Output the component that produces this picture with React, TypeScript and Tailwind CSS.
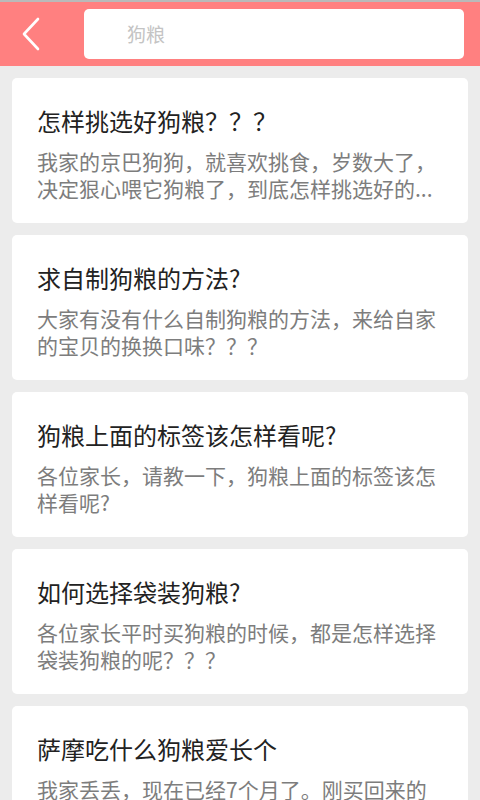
const posts = [
  {
    title: "怎样挑选好狗粮？？？",
    desc: "我家的京巴狗狗，就喜欢挑食，岁数大了，决定狠心喂它狗粮了，到底怎样挑选好的...",
  },
  {
    title: "求自制狗粮的方法?",
    desc: "大家有没有什么自制狗粮的方法，来给自家的宝贝的换换口味？？？",
  },
  {
    title: "狗粮上面的标签该怎样看呢?",
    desc: "各位家长，请教一下，狗粮上面的标签该怎样看呢?",
  },
  {
    title: "如何选择袋装狗粮?",
    desc: "各位家长平时买狗粮的时候，都是怎样选择袋装狗粮的呢？？？",
  },
  {
    title: "萨摩吃什么狗粮爱长个",
    desc: "我家丢丢，现在已经7个月了。刚买回来的时候很瘦小，吃什么狗粮能长个呢？",
  },
];

export default function App() {
  return (
    <div
      className="h-[800px] w-[480px] overflow-hidden bg-[#ececec]"
      style={{ fontFamily: '"Noto Sans CJK SC", "Noto Sans", sans-serif' }}
    >
      <div className="h-[2px] bg-[#b9b9b9]" />
      <header className="flex h-[64px] items-center bg-[#ff8080] pr-[16px]">
        <button className="flex h-full w-[84px] items-center pl-[20px]">
          <svg width="22" height="34" viewBox="0 0 22 34" fill="none">
            <path
              d="M18 2 L4 17 L18 32"
              stroke="white"
              strokeWidth="2.6"
              strokeLinecap="round"
              strokeLinejoin="round"
            />
          </svg>
        </button>
        <div className="flex h-[50px] flex-1 items-center rounded-[5px] bg-white pl-[43px]">
          <span className="text-[19px] text-[#c4c4c4]">狗粮</span>
        </div>
      </header>

      <div className="flex flex-col gap-[12px] px-[12px] pt-[12px]">
        {posts.map((p) => (
          <div
            key={p.title}
            className="rounded-[5px] bg-white px-[25px] pb-[21px] pt-[28px]"
          >
            <h2 className="text-[24px] leading-[30px] text-[#222]">{p.title}</h2>
            <p className="mt-[12px] text-[21px] leading-[27px] text-[#7d7d7d]">
              {p.desc}
            </p>
          </div>
        ))}
      </div>
    </div>
  );
}
